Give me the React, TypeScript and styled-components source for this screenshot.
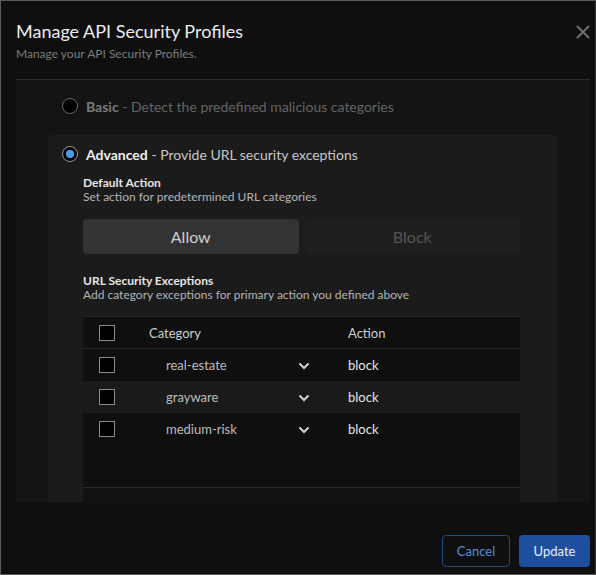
import React from "react";
import styled, { createGlobalStyle } from "styled-components";

const GlobalStyle = createGlobalStyle`
	html, body {
		margin: 0;
		padding: 0;
		background: #0f0f0f;
		font-family: Lato, "Open Sans", sans-serif;
	}
	* { box-sizing: border-box; }
`;

const categories = [
	{ name: "real-estate", action: "block" },
	{ name: "grayware", action: "block" },
	{ name: "medium-risk", action: "block" },
];

const App = () => {
	return (
		<>
			<GlobalStyle />
			<Modal>
				<Header>
					<div>
						<Title>Manage API Security Profiles</Title>
						<Subtitle>Manage your API Security Profiles.</Subtitle>
					</div>
					<CloseButton aria-label="close">
						<svg width="14" height="14" viewBox="0 0 14 14">
							<path d="M1 1L13 13M13 1L1 13" stroke="#6e6e6e" strokeWidth="2" />
						</svg>
					</CloseButton>
				</Header>

				<Body>
					<OptionRow $muted>
						<Radio />
						<OptionText $muted>
							<strong>Basic</strong> - Detect the predefined malicious categories
						</OptionText>
					</OptionRow>

					<Card>
						<OptionRow>
							<Radio $checked />
							<OptionText>
								<strong>Advanced</strong> - Provide URL security exceptions
							</OptionText>
						</OptionRow>

						<Section>
							<SectionTitle>Default Action</SectionTitle>
							<SectionHint>Set action for predetermined URL categories</SectionHint>
						</Section>

						<Toggle>
							<ToggleButton $active>Allow</ToggleButton>
							<ToggleButton>Block</ToggleButton>
						</Toggle>

						<Section>
							<SectionTitle>URL Security Exceptions</SectionTitle>
							<SectionHint>Add category exceptions for primary action you defined above</SectionHint>
						</Section>

						<Table>
							<HeadRow>
								<CheckCell>
									<Checkbox />
								</CheckCell>
								<HeadCell>Category</HeadCell>
								<HeadCell $action>Action</HeadCell>
							</HeadRow>
							{categories.map((c, i) => (
								<Row key={c.name} $alt={i % 2 === 1}>
									<CheckCell>
										<Checkbox />
									</CheckCell>
									<CategoryCell>
										<span>{c.name}</span>
										<svg width="12" height="8" viewBox="0 0 12 8">
											<path d="M1.5 1.5L6 6L10.5 1.5" fill="none" stroke="#d0d0d0" strokeWidth="2" />
										</svg>
									</CategoryCell>
									<ActionCell>{c.action}</ActionCell>
								</Row>
							))}
							<Filler />
							<TableFooter />
						</Table>
					</Card>
				</Body>

				<Footer>
					<CancelButton>Cancel</CancelButton>
					<PrimaryButton>Update</PrimaryButton>
				</Footer>
			</Modal>
		</>
	);
};

export default App;

const Modal = styled.div`
	width: 596px;
	height: 575px;
	border: 1px solid #5c5c5c;
	border-right-color: #3a3a3a;
	background: #0f0f0f;
	display: flex;
	flex-direction: column;
	overflow: hidden;
`;

const Header = styled.div`
	display: flex;
	justify-content: space-between;
	align-items: flex-start;
	padding: 19px 5px 0 15px;
	height: 78px;
`;

const Title = styled.h1`
	margin: 0;
	font-size: 18px;
	font-weight: 400;
	color: #ececec;
	line-height: 22px;
`;

const Subtitle = styled.p`
	margin: 4px 0 0;
	font-size: 12px;
	color: #7c7c7c;
	line-height: 15px;
`;

const CloseButton = styled.button`
	background: none;
	border: none;
	padding: 0;
	margin-top: 5px;
	width: 14px;
	height: 14px;
	display: flex;
	cursor: pointer;
`;

const Body = styled.div`
	margin: 0 5px 0 15px;
	height: 423px;
	border-top: 1px solid #2e2e2e;
	background: #141414;
	overflow: hidden;
	padding-top: 17px;
`;

const OptionRow = styled.div<{ $muted?: boolean }>`
	display: flex;
	align-items: center;
	gap: 8px;
	padding-left: ${(p) => (p.$muted ? "46px" : "0")};
	height: 18px;
`;

const Radio = styled.span<{ $checked?: boolean }>`
	width: 16px;
	height: 16px;
	border-radius: 50%;
	border: 1px solid ${(p) => (p.$checked ? "#9a9a9a" : "#6a6a6a")};
	background: #000;
	display: flex;
	align-items: center;
	justify-content: center;
	&::after {
		content: "";
		display: ${(p) => (p.$checked ? "block" : "none")};
		width: 8px;
		height: 8px;
		border-radius: 50%;
		background: #4a9bf2;
	}
`;

const OptionText = styled.span<{ $muted?: boolean }>`
	font-size: 14px;
	color: ${(p) => (p.$muted ? "#646464" : "#c8c8c8")};
	strong {
		font-weight: 700;
		color: ${(p) => (p.$muted ? "#7a7a7a" : "#efefef")};
	}
`;

const Card = styled.div`
	margin: 20px 32px 0 32px;
	background: #1b1b1b;
	border-radius: 4px;
	padding: 10px 38px 0 14px;
	height: 400px;
`;

const Section = styled.div`
	padding-left: 21px;
	margin-top: 12px;
`;

const SectionTitle = styled.div`
	font-size: 12px;
	font-weight: 700;
	color: #e6e6e6;
	line-height: 15px;
`;

const SectionHint = styled.div`
	font-size: 12px;
	color: #b4b4b4;
	line-height: 14px;
`;

const Toggle = styled.div`
	display: grid;
	grid-template-columns: 1fr 1fr;
	gap: 6px;
	margin: 15px 0 19px 21px;
`;

const ToggleButton = styled.button<{ $active?: boolean }>`
	height: 35px;
	border: none;
	border-radius: 4px;
	background: ${(p) => (p.$active ? "#333333" : "#1f1f1f")};
	color: ${(p) => (p.$active ? "#cfcfcf" : "#555555")};
	font-family: Lato, sans-serif;
	font-size: 16px;
	cursor: pointer;
`;

const Table = styled.div`
	margin: 14px 0 0 21px;
	background: #0f0f0f;
	border-top: 1px solid #262626;
`;

const gridCols = `
	display: grid;
	grid-template-columns: 50px 215px 1fr;
	align-items: center;
	height: 32px;
`;

const HeadRow = styled.div`
	${gridCols}
	border-bottom: 1px solid #2a2a2a;
`;

const Row = styled.div<{ $alt?: boolean }>`
	${gridCols}
	background: ${(p) => (p.$alt ? "#1a1a1a" : "#0f0f0f")};
`;

const CheckCell = styled.div`
	padding-left: 16px;
	display: flex;
`;

const Checkbox = styled.span`
	width: 16px;
	height: 16px;
	border: 1px solid #8a8a8a;
	background: #000;
`;

const HeadCell = styled.div<{ $action?: boolean }>`
	font-size: 13px;
	color: #cdcdcd;
	padding-left: ${(p) => (p.$action ? "0" : "16px")};
`;

const CategoryCell = styled.div`
	display: flex;
	align-items: center;
	justify-content: space-between;
	padding: 0 38px 0 33px;
	font-size: 13px;
	color: #bdbdbd;
	svg {
		margin-top: 1px;
	}
`;

const ActionCell = styled.div`
	font-size: 13px;
	color: #e4e4e4;
`;

const Filler = styled.div`
	height: 43px;
	border-bottom: 1px solid #2a2a2a;
`;

const TableFooter = styled.div`
	height: 40px;
	background: #111111;
`;

const Footer = styled.div`
	flex: 1;
	display: flex;
	justify-content: flex-end;
	align-items: flex-end;
	gap: 9px;
	padding: 0 5px 7px 0;
`;

const CancelButton = styled.button`
	height: 32px;
	width: 68px;
	border: 1px solid #1d4a82;
	border-radius: 4px;
	background: transparent;
	color: #4f8fd8;
	font-family: Lato, sans-serif;
	font-size: 13px;
	cursor: pointer;
`;

const PrimaryButton = styled.button`
	height: 32px;
	width: 71px;
	border: none;
	border-radius: 4px;
	background: #1e4f9f;
	color: #e9eef7;
	font-family: Lato, sans-serif;
	font-size: 13px;
	cursor: pointer;
`;
